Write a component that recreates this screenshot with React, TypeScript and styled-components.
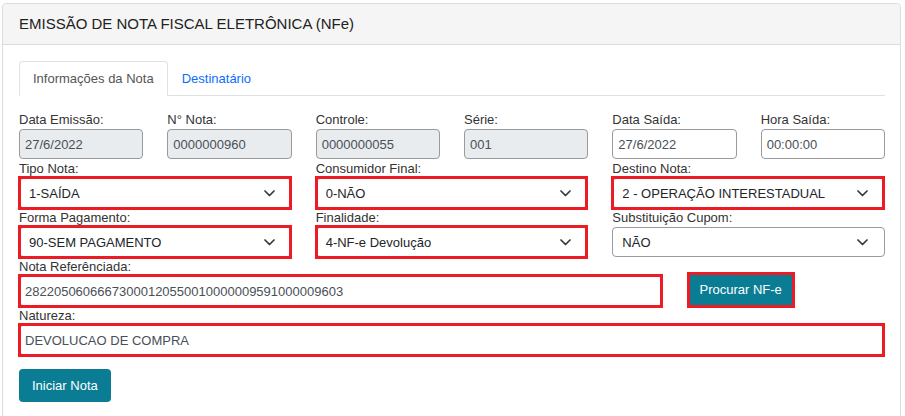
import React from "react";
import styled, { createGlobalStyle, css } from "styled-components";

const GlobalStyle = createGlobalStyle`
  html, body { margin: 0; padding: 0; background: #fff; }
  body {
    font-family: "Liberation Sans", Arial, Helvetica, sans-serif;
    color: #333;
  }
  * { box-sizing: border-box; }
`;

/* the red annotation box drawn over a control */
const flagged = css`
  position: relative;
  &::after {
    content: "";
    position: absolute;
    top: -3px;
    bottom: -3px;
    left: -2px;
    right: -1px;
    border: 3px solid #ed1c24;
    pointer-events: none;
  }
`;

const Page = styled.div`
  padding: 3px 4px 0 2px;
`;

const Card = styled.section`
  border: 1px solid #dcdcdc;
  border-radius: 4px;
  background: #fff;
`;

const CardHeader = styled.header`
  height: 41px;
  display: flex;
  align-items: center;
  padding: 0 16px 1px;
  background: #f5f5f5;
  border-bottom: 1px solid #dcdcdc;
  border-radius: 4px 4px 0 0;
  font-size: 15px;
  color: #222;
`;

const CardBody = styled.div`
  padding: 16px 15px 24px 16px;
`;

const Tabs = styled.nav`
  display: flex;
  height: 35px;
  border-bottom: 1px solid #dee2e6;
`;

const Tab = styled.div<{ $active?: boolean }>`
  height: 35px;
  line-height: 34px;
  padding: 0 13px;
  margin-bottom: -1px;
  font-size: 13px;
  border: 1px solid transparent;
  border-radius: 4px 4px 0 0;
  color: #0d6efd;
  ${(p) =>
    p.$active &&
    css`
      color: #555;
      background: #fff;
      border-color: #dee2e6 #dee2e6 #fff;
    `}
`;

const Form = styled.div`
  margin-top: 16px;
  display: grid;
  grid-template-columns: repeat(12, 1fr);
  column-gap: 24px;
  row-gap: 2px;
`;

const Field = styled.div<{ $span: number }>`
  grid-column: span ${(p) => p.$span};
  display: flex;
  flex-direction: column;
  min-width: 0;
`;

const Label = styled.label`
  font-size: 13px;
  line-height: 16px;
  margin-bottom: 1px;
  color: #333;
  white-space: nowrap;
`;

const Input = styled.div<{ $disabled?: boolean; $flag?: boolean }>`
  height: 30px;
  display: flex;
  align-items: center;
  padding: 0 5px;
  border: 1px solid #9a9a9a;
  border-radius: 4px;
  background: ${(p) => (p.$disabled ? "#e9ecef" : "#fff")};
  font-size: 13px;
  color: #495057;
  white-space: nowrap;
  ${(p) => p.$flag && flagged}
`;

const Select = styled.div<{ $flag?: boolean }>`
  height: 30px;
  display: flex;
  align-items: center;
  justify-content: space-between;
  padding: 0 16px 0 9px;
  border: 1px solid #9a9a9a;
  border-radius: 4px;
  background: #fff;
  font-size: 13px;
  color: #212529;
  white-space: nowrap;
  ${(p) => p.$flag && flagged}
`;

const ButtonCell = styled.div<{ $span: number }>`
  grid-column: span ${(p) => p.$span};
  display: flex;
  align-items: flex-end;
`;

const Button = styled.button<{ $flag?: boolean }>`
  height: 33px;
  padding: 0 13px;
  border: none;
  border-radius: 4px;
  background: #0a7d95;
  color: #fff;
  font-family: inherit;
  font-size: 13px;
  cursor: pointer;
  ${(p) =>
    p.$flag &&
    css`
      position: relative;
      &::after {
        content: "";
        position: absolute;
        top: -1px;
        bottom: -2px;
        left: 0;
        right: 0;
        border: 3px solid #ed1c24;
        pointer-events: none;
      }
    `}
`;

const Actions = styled.div`
  margin-top: 14px;
`;

const Chevron = () => (
  <svg width="11" height="7" viewBox="0 0 11 7" fill="none">
    <path d="M1 1l4.5 4.5L10 1" stroke="#343a40" strokeWidth="1.7" strokeLinecap="round" strokeLinejoin="round" />
  </svg>
);

type SelProps = { label: string; value: string; flag?: boolean };
const SelectField = ({ label, value, flag }: SelProps) => (
  <Field $span={4}>
    <Label>{label}</Label>
    <Select $flag={flag}>
      <span>{value}</span>
      <Chevron />
    </Select>
  </Field>
);

type InProps = { label: string; value: string; span: number; disabled?: boolean; flag?: boolean };
const InputField = ({ label, value, span, disabled, flag }: InProps) => (
  <Field $span={span}>
    <Label>{label}</Label>
    <Input $disabled={disabled} $flag={flag}>
      {value}
    </Input>
  </Field>
);

export default function App() {
  return (
    <Page>
      <GlobalStyle />
      <Card>
        <CardHeader>EMISSÃO DE NOTA FISCAL ELETRÔNICA (NFe)</CardHeader>
        <CardBody>
          <Tabs>
            <Tab $active>Informações da Nota</Tab>
            <Tab>Destinatário</Tab>
          </Tabs>
          <Form>
            <InputField label="Data Emissão:" value="27/6/2022" span={2} disabled />
            <InputField label="N° Nota:" value="0000000960" span={2} disabled />
            <InputField label="Controle:" value="0000000055" span={2} disabled />
            <InputField label="Série:" value="001" span={2} disabled />
            <InputField label="Data Saída:" value="27/6/2022" span={2} />
            <InputField label="Hora Saída:" value="00:00:00" span={2} />

            <SelectField label="Tipo Nota:" value="1-SAÍDA" flag />
            <SelectField label="Consumidor Final:" value="0-NÃO" flag />
            <SelectField label="Destino Nota:" value="2 - OPERAÇÃO INTERESTADUAL" flag />

            <SelectField label="Forma Pagamento:" value="90-SEM PAGAMENTO" flag />
            <SelectField label="Finalidade:" value="4-NF-e Devolução" flag />
            <SelectField label="Substituição Cupom:" value="NÃO" />

            <InputField
              label="Nota Referênciada:"
              value="28220506066673000120550010000009591000009603"
              span={9}
              flag
            />
            <ButtonCell $span={3}>
              <Button $flag>Procurar NF-e</Button>
            </ButtonCell>

            <InputField label="Natureza:" value="DEVOLUCAO DE COMPRA" span={12} flag />
          </Form>
          <Actions>
            <Button>Iniciar Nota</Button>
          </Actions>
        </CardBody>
      </Card>
    </Page>
  );
}
